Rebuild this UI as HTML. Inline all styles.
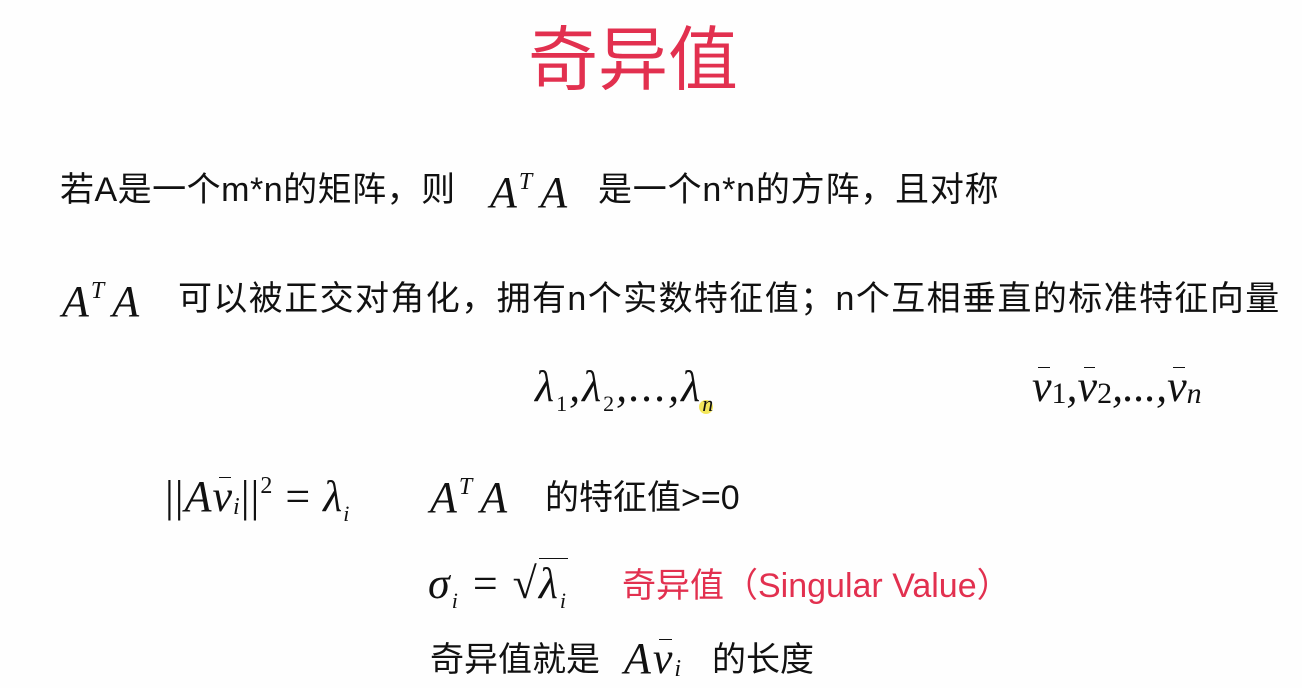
<!DOCTYPE html>
<html><head><meta charset="utf-8"><style>
body{margin:0;width:1302px;height:688px;background:#fefefe;position:relative;overflow:hidden;font-family:"Liberation Sans","Noto Sans CJK SC",sans-serif;color:#111}
.a{position:absolute;white-space:nowrap;line-height:1}
.t{font-size:34px}
.m{font-family:"Liberation Serif",serif;font-style:italic;font-size:44px;letter-spacing:2px}
.m sup{font-size:24px;vertical-align:18px;margin-right:6px}
.m sub{font-size:22px;vertical-align:-10px}
.up{font-style:normal}
.vec{position:relative;display:inline-block}
.vec:before{content:"";position:absolute;left:6px;right:2px;top:2px;border-top:1.5px solid #111}
</style></head><body>
<div style="position:absolute;left:699px;top:400px;width:14px;height:14px;border-radius:50%;background:#f3e65a"></div>
<div class="a" style="left:528px;top:20px;font-size:70px;color:#e2304f;font-family:'Noto Sans CJK SC',sans-serif">奇异值</div>

<div class="a t" style="left:60px;top:173px;letter-spacing:0.5px">若A是一个m*n的矩阵，则</div>
<div class="a m" style="left:490px;top:170px">A<sup>T</sup>A</div>
<div class="a t" style="left:598px;top:173px;letter-spacing:0.8px">是一个n*n的方阵，且对称</div>

<div class="a m" style="left:62px;top:279px">A<sup>T</sup>A</div>
<div class="a t" style="left:178px;top:282px;letter-spacing:1.4px">可以被正交对角化，拥有n个实数特征值；n个互相垂直的标准特征向量</div>

<div class="a m" style="left:535px;top:365px;letter-spacing:2px">λ<sub class="up">1</sub>,λ<sub class="up">2</sub>,...,λ<sub>n</sub></div>
<div class="a m" style="left:1032px;top:365px;letter-spacing:0"><span class="vec">v</span><sub class="up" style="vertical-align:-2px;font-size:30px">1</sub>,<span class="vec">v</span><sub class="up" style="vertical-align:-2px;font-size:30px">2</sub>,...,<span class="vec">v</span><sub style="vertical-align:-2px;font-size:30px">n</sub></div>

<div class="a m" style="left:165px;top:474px;letter-spacing:1px"><span class="up">||</span>A<span class="vec">v</span><sub style="font-size:24px;vertical-align:-3px">i</sub><span class="up">||</span><sup class="up" style="margin-right:0">2</sup><span class="up"> = </span>λ<sub>i</sub></div>
<div class="a m" style="left:430px;top:475px">A<sup>T</sup>A</div>
<div class="a t" style="left:545px;top:481px">的特征值&gt;=0</div>

<div class="a m" style="left:428px;top:562px">σ<sub>i</sub><span class="up"> = </span><span class="up">√</span><span style="border-top:1.5px solid #111">λ<sub>i</sub></span></div>
<div class="a t" style="left:622px;top:569px;color:#e2304f">奇异值（Singular Value）</div>

<div class="a t" style="left:430px;top:643px">奇异值就是</div>
<div class="a m" style="left:624px;top:637px">A<span class="vec">v</span><sub style="font-size:24px;vertical-align:-3px">i</sub></div>
<div class="a t" style="left:712px;top:643px">的长度</div>
</body></html>
